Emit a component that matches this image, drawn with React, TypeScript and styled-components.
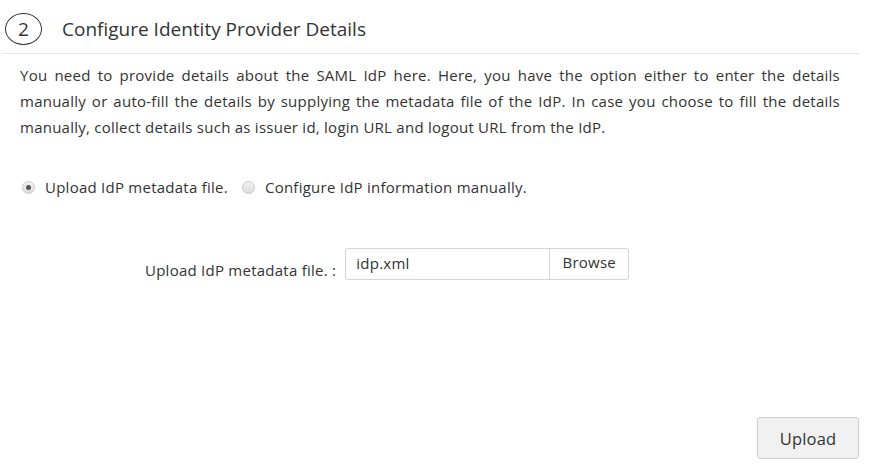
import React from "react";
import styled, { createGlobalStyle } from "styled-components";

const Global = createGlobalStyle`
  html, body { margin: 0; padding: 0; background: #fff; }
  body { font-family: "Open Sans", "Noto Sans", sans-serif; color: #333; }
  * { box-sizing: border-box; }
`;

const Page = styled.div`
  width: 857px;
  margin-left: 2px;
  display: flex;
  flex-direction: column;
  height: 468px;
`;

const Header = styled.div`
  display: flex;
  align-items: center;
  height: 54px;
  padding: 5px 0 0 3px;
  border-bottom: 1px solid #e5e5e5;
`;

const StepBadge = styled.div`
  width: 37px;
  height: 32px;
  border: 1px solid #333;
  border-radius: 50%;
  display: flex;
  align-items: center;
  justify-content: center;
  font-size: 19px;
  color: #333;
  margin-right: 20px;
`;

const Title = styled.h2`
  margin: 0;
  font-size: 19px;
  font-weight: 400;
  color: #333;
`;

const Body = styled.div`
  padding: 8px 19px 0 18px;
  flex: 1;
  display: flex;
  flex-direction: column;
  font-size: 15px;
  letter-spacing: 0.25px;
`;

const Intro = styled.p`
  margin: 0;
  line-height: 26px;
  text-align: justify;
  color: #333;
`;

const RadioRow = styled.div`
  display: flex;
  align-items: center;
  margin-top: 37px;
  height: 20px;
`;

const RadioLabel = styled.label`
  display: flex;
  align-items: center;
  margin-right: 12px;
  color: #333;
`;

const RadioDot = styled.span<{ $checked?: boolean }>`
  width: 13px;
  height: 13px;
  border-radius: 50%;
  border: 1px solid #c8c8c8;
  background: linear-gradient(#f2f2f2, #dcdcdc);
  margin: 0 10px 0 2px;
  display: inline-flex;
  align-items: center;
  justify-content: center;
  &::after {
    content: "";
    display: ${(p) => (p.$checked ? "block" : "none")};
    width: 5px;
    height: 5px;
    border-radius: 50%;
    background: #555;
  }
`;

const FileRow = styled.div`
  display: flex;
  align-items: center;
  margin-top: 51px;
  padding-left: 125px;
`;

const FileLabel = styled.span`
  color: #333;
  margin-right: 9px;
  padding-top: 11px;
`;

const FileGroup = styled.div`
  display: flex;
  height: 32px;
  border: 1px solid #d4d4d4;
  border-radius: 3px;
  overflow: hidden;
`;

const FileName = styled.div`
  width: 204px;
  padding: 4px 10px;
  color: #333;
  border-right: 1px solid #d4d4d4;
`;

const BrowseBtn = styled.div`
  width: 78px;
  display: flex;
  justify-content: center;
  padding-top: 3px;
  color: #333;
`;

const Footer = styled.div`
  margin-top: auto;
  display: flex;
  justify-content: flex-end;
  margin-right: -19px;
  padding-bottom: 9px;
`;

const UploadBtn = styled.button`
  width: 102px;
  height: 42px;
  border: 1px solid #ccc;
  border-radius: 3px;
  background: #f1f1f1;
  font-family: "Open Sans", "Noto Sans", sans-serif;
  font-size: 16.5px;
  letter-spacing: 0.2px;
  color: #333;
`;

export default function App() {
  return (
    <>
      <Global />
      <Page>
        <Header>
          <StepBadge>2</StepBadge>
          <Title>Configure Identity Provider Details</Title>
        </Header>
        <Body>
          <Intro>
            You need to provide details about the SAML IdP here. Here, you have the option either to enter the details
            manually or auto-fill the details by supplying the metadata file of the IdP. In case you choose to fill the
            details manually, collect details such as issuer id, login URL and logout URL from the IdP.
          </Intro>
          <RadioRow>
            <RadioLabel>
              <RadioDot $checked />
              Upload IdP metadata file.
            </RadioLabel>
            <RadioLabel>
              <RadioDot />
              Configure IdP information manually.
            </RadioLabel>
          </RadioRow>
          <FileRow>
            <FileLabel>Upload IdP metadata file. :</FileLabel>
            <FileGroup>
              <FileName>idp.xml</FileName>
              <BrowseBtn>Browse</BrowseBtn>
            </FileGroup>
          </FileRow>
          <Footer>
            <UploadBtn>Upload</UploadBtn>
          </Footer>
        </Body>
      </Page>
    </>
  );
}
